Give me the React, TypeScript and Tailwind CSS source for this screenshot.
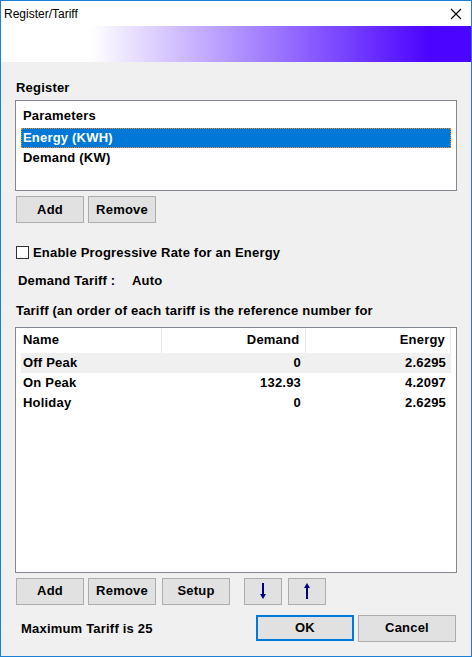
import React from "react";

const font = { fontFamily: '"Liberation Sans", Arial, sans-serif' };

function WinButton({
  children,
  className = "",
}: {
  children: React.ReactNode;
  className?: string;
}) {
  return (
    <button
      className={`flex h-[27px] items-center justify-center border border-[#adadad] bg-[#e1e1e1] text-[13px] font-bold tracking-[0.2px] text-black ${className}`}
    >
      {children}
    </button>
  );
}

function ArrowIcon({ up }: { up?: boolean }) {
  return (
    <svg width="8" height="16" viewBox="0 0 8 16">
      {up ? (
        <>
          <rect x="3" y="3" width="2" height="13" fill="#000080" />
          <path d="M4 0 L7 5 L1 5 Z" fill="#000080" />
        </>
      ) : (
        <>
          <rect x="3" y="0" width="2" height="13" fill="#000080" />
          <path d="M4 16 L7 11 L1 11 Z" fill="#000080" />
        </>
      )}
    </svg>
  );
}

const tariffs = [
  { name: "Off Peak", demand: "0", energy: "2.6295" },
  { name: "On Peak", demand: "132.93", energy: "4.2097" },
  { name: "Holiday", demand: "0", energy: "2.6295" },
];

export default function App() {
  return (
    <div
      className="flex h-[657px] w-[472px] flex-col border border-[#1c7fd6] bg-[#f0f0f0] text-black"
      style={font}
    >
      {/* Title bar */}
      <div className="flex h-[25px] items-center justify-between bg-white pl-[3px] pr-[9px]">
        <span className="text-[12px]">Register/Tariff</span>
        <svg width="12" height="12" viewBox="0 0 12 12">
          <path d="M1 1 L11 11 M11 1 L1 11" stroke="#000" strokeWidth="1.1" />
        </svg>
      </div>

      {/* Banner */}
      <div className="h-[36px] bg-[linear-gradient(to_right,#ffffff_19%,#4b04ff_91%)]" />

      <div className="flex flex-1 flex-col px-[14px] text-[13px] font-bold tracking-[0.2px]">
        <div className="mt-[18px] h-[16px] pl-px leading-[16px]">Register</div>

        {/* Register list */}
        <div className="mt-[4px] h-[91px] border border-[#828790] bg-white px-[5px] pt-[3px]">
          <div className="flex h-[24px] items-center pl-[2px]">Parameters</div>
          <div className="flex h-[20px] items-center border border-dotted border-[#f08a24] bg-[#0078d7] pl-px text-white">
            Energy (KWH)
          </div>
          <div className="flex h-[20px] items-center pl-[2px]">Demand (KW)</div>
        </div>

        <div className="mt-[5px] flex gap-[4px] pl-px">
          <WinButton className="w-[68px]">Add</WinButton>
          <WinButton className="w-[68px]">Remove</WinButton>
        </div>

        {/* Checkbox */}
        <div className="mt-[20px] flex items-center gap-[4px] pl-px">
          <span className="h-[13px] w-[13px] border border-[#333] bg-white" />
          <span>Enable Progressive Rate for an Energy</span>
        </div>

        <div className="mt-[10px] flex h-[16px] items-center pl-[3px]">
          <span className="w-[114px]">Demand Tariff :</span>
          <span>Auto</span>
        </div>

        <div className="mt-[14px] flex h-[16px] items-center pl-px">
          Tariff (an order of each tariff is the reference number for
        </div>

        {/* Tariff table */}
        <div className="mt-[8px] h-[246px] border border-[#828790] bg-white px-[5px]">
          <div className="flex h-[25px] items-center">
            <div className="flex h-full w-[141px] items-center border-r border-[#e5e5e5] pl-[2px]">
              Name
            </div>
            <div className="flex h-full w-[145px] items-center justify-end border-r border-[#e5e5e5] pr-[6px]">
              Demand
            </div>
            <div className="flex h-full w-[145px] items-center justify-end border-r border-[#e5e5e5] pr-[5px]">
              Energy
            </div>
          </div>
          {tariffs.map((t, i) => (
            <div
              key={t.name}
              className={`flex h-[20px] w-[430px] items-center ${i === 0 ? "bg-[#f0f0f0]" : ""}`}
            >
              <div className="w-[141px] pl-[2px]">{t.name}</div>
              <div className="w-[145px] pr-[6px] text-right">{t.demand}</div>
              <div className="w-[144px] pr-[5px] text-right">{t.energy}</div>
            </div>
          ))}
        </div>

        <div className="mt-[5px] flex pl-px">
          <WinButton className="w-[68px]">Add</WinButton>
          <WinButton className="ml-[4px] w-[68px]">Remove</WinButton>
          <WinButton className="ml-[6px] w-[68px]">Setup</WinButton>
          <WinButton className="ml-[14px] w-[38px]">
            <ArrowIcon />
          </WinButton>
          <WinButton className="ml-[6px] w-[38px]">
            <ArrowIcon up />
          </WinButton>
        </div>

        <div className="mt-[10px] flex items-start">
          <div className="mt-[4px] w-[241px] pl-[6px]">Maximum Tariff is 25</div>
          <button className="flex h-[26px] w-[98px] items-center justify-center border-2 border-[#0078d7] bg-[#e1e1e1] text-[13px] font-bold">
            OK
          </button>
          <WinButton className="ml-[4px] h-[26px] w-[98px]">Cancel</WinButton>
        </div>
      </div>
    </div>
  );
}
